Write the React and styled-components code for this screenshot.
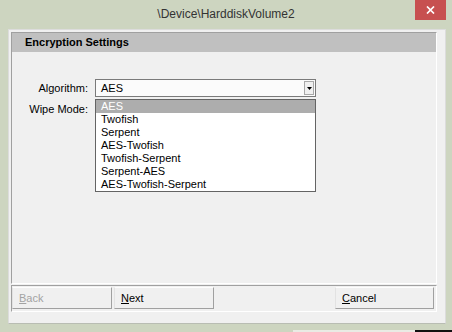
import styled, { createGlobalStyle } from 'styled-components';

const GlobalStyle = createGlobalStyle`
  html, body {
    margin: 0;
    padding: 0;
    background: #cdd5c0;
  }
  * {
    box-sizing: border-box;
  }
`;

export const Window = styled.div`
  width: 452px;
  height: 332px;
  overflow: hidden;
  display: flex;
  flex-direction: column;
  background: #cdd5c0;
  font-family: 'Liberation Sans', Arial, sans-serif;
`;

export const TitleBar = styled.div`
  height: 29px;
  display: grid;
  grid-template-columns: 1fr auto 1fr;
  align-items: start;
`;

export const Title = styled.div`
  grid-column: 2;
  line-height: 29px;
  font-size: 12px;
  color: #333333;
  white-space: nowrap;
`;

export const CloseButton = styled.div`
  grid-column: 3;
  justify-self: end;
  margin-right: 6px;
  width: 31px;
  height: 20px;
  background: #c75050;
  display: flex;
  align-items: center;
  justify-content: center;
`;

export const Client = styled.div`
  height: 295px;
  margin: 0 6px 0 8px;
  padding: 2px 8px 0 2px;
  background: #f0f0f0;
  border: 1px solid #dcdcdc;
  border-bottom-color: #b9bdb3;
  display: flex;
  flex-direction: column;
`;

export const GroupBox = styled.div`
  border-top: 1px solid #a0a0a0;
  border-left: 1px solid #a0a0a0;
  border-right: 1px solid #ffffff;
  border-bottom: 1px solid #ffffff;
`;

export const SettingsPanel = styled(GroupBox)`
  height: 252px;
  display: flex;
  flex-direction: column;
`;

export const PanelHeader = styled.div`
  height: 19px;
  line-height: 19px;
  background: #c0c0c0;
  padding-left: 13px;
  font-size: 11px;
  font-weight: bold;
  color: #000;
`;

export const Form = styled.div`
  margin-top: 27px;
  display: grid;
  grid-template-columns: 76px 221px;
  grid-auto-rows: 18px;
  column-gap: 7px;
  row-gap: 3px;
  font-size: 11px;
`;

export const Label = styled.div`
  text-align: right;
  line-height: 18px;
  color: #000;
  white-space: nowrap;
`;

export const Select = styled.div`
  position: relative;
  height: 18px;
  border: 1px solid #7a7a7a;
  background: #fbfbfb;
  display: flex;
  align-items: center;
  padding-left: 5px;
  color: #000;
  z-index: ${(p) => (p.$open ? 2 : 1)};
`;

export const SelectValue = styled.span`
  flex: 1;
`;

export const DropArrow = styled.div`
  width: 10px;
  height: 14px;
  margin-right: 1px;
  background: #f0f0f0;
  border: 1px solid #a8a8a8;
  display: flex;
  align-items: center;
  justify-content: center;
`;

export const DropList = styled.div`
  position: absolute;
  top: 19px;
  left: -1px;
  width: 221px;
  border: 1px solid #646464;
  background: #ffffff;
`;

export const DropItem = styled.div`
  height: 13px;
  line-height: 13px;
  padding-left: 5px;
  background: ${(p) => (p.$selected ? '#adadad' : 'transparent')};
  color: ${(p) => (p.$selected ? '#ffffff' : '#000000')};
  white-space: nowrap;
`;

export const ButtonBar = styled(GroupBox)`
  margin-top: 1px;
  height: 27px;
  padding: 1px 1px 0 0;
  display: flex;
  gap: 2px;
`;

export const WizardButton = styled.div`
  width: ${(p) => (p.$pushRight ? 99 : 100)}px;
  height: 22px;
  line-height: 20px;
  padding-left: 6px;
  font-size: 11px;
  background: #f0f0f0;
  border-top: 1px solid #fdfdfd;
  border-left: 1px solid #e2e2e2;
  border-right: 1px solid #a0a0a0;
  border-bottom: 1px solid #a0a0a0;
  color: ${(p) => (p.$disabled ? '#a3a3a3' : '#000000')};
  margin-left: ${(p) => (p.$pushRight ? 'auto' : '0')};
  margin-right: ${(p) => (p.$pushRight ? '1px' : '0')};
`;

export const BottomEdge = styled.div`
  margin-top: 6px;
  height: 2px;
  display: flex;
`;

export const EdgePart = styled.div`
  width: ${(p) => p.$w}px;
  flex: ${(p) => (p.$grow ? 1 : 'none')};
  background: ${(p) => p.$bg};
`;

const algorithms = [
  'AES',
  'Twofish',
  'Serpent',
  'AES-Twofish',
  'Twofish-Serpent',
  'Serpent-AES',
  'AES-Twofish-Serpent',
];

function App() {
  return (
    <Window>
      <GlobalStyle />
      <TitleBar>
        <Title>\Device\HarddiskVolume2</Title>
        <CloseButton>
          <svg width="9" height="8" viewBox="0 0 9 8">
            <path d="M1 0.5 L8 7.5 M8 0.5 L1 7.5" stroke="#fff" strokeWidth="1.7" />
          </svg>
        </CloseButton>
      </TitleBar>
      <Client>
        <SettingsPanel>
          <PanelHeader>Encryption Settings</PanelHeader>
          <Form>
            <Label>Algorithm:</Label>
            <Select $open>
              <SelectValue>AES</SelectValue>
              <DropArrow>
                <svg width="5" height="3" viewBox="0 0 5 3">
                  <path d="M0 0 H5 L2.5 3 Z" fill="#000" />
                </svg>
              </DropArrow>
              <DropList>
                {algorithms.map((a, i) => (
                  <DropItem key={a} $selected={i === 0}>
                    {a}
                  </DropItem>
                ))}
              </DropList>
            </Select>
            <Label>Wipe Mode:</Label>
            <Select>
              <SelectValue />
            </Select>
          </Form>
        </SettingsPanel>
        <ButtonBar>
          <WizardButton $disabled>
            <u>B</u>ack
          </WizardButton>
          <WizardButton>
            <u>N</u>ext
          </WizardButton>
          <WizardButton $pushRight>
            <u>C</u>ancel
          </WizardButton>
        </ButtonBar>
      </Client>
      <BottomEdge>
        <EdgePart $w={293} $bg="#cdd5c0" />
        <EdgePart $w={122} $bg="#e9ebe4" />
        <EdgePart $grow $bg="#111111" />
      </BottomEdge>
    </Window>
  );
}

export default App;
